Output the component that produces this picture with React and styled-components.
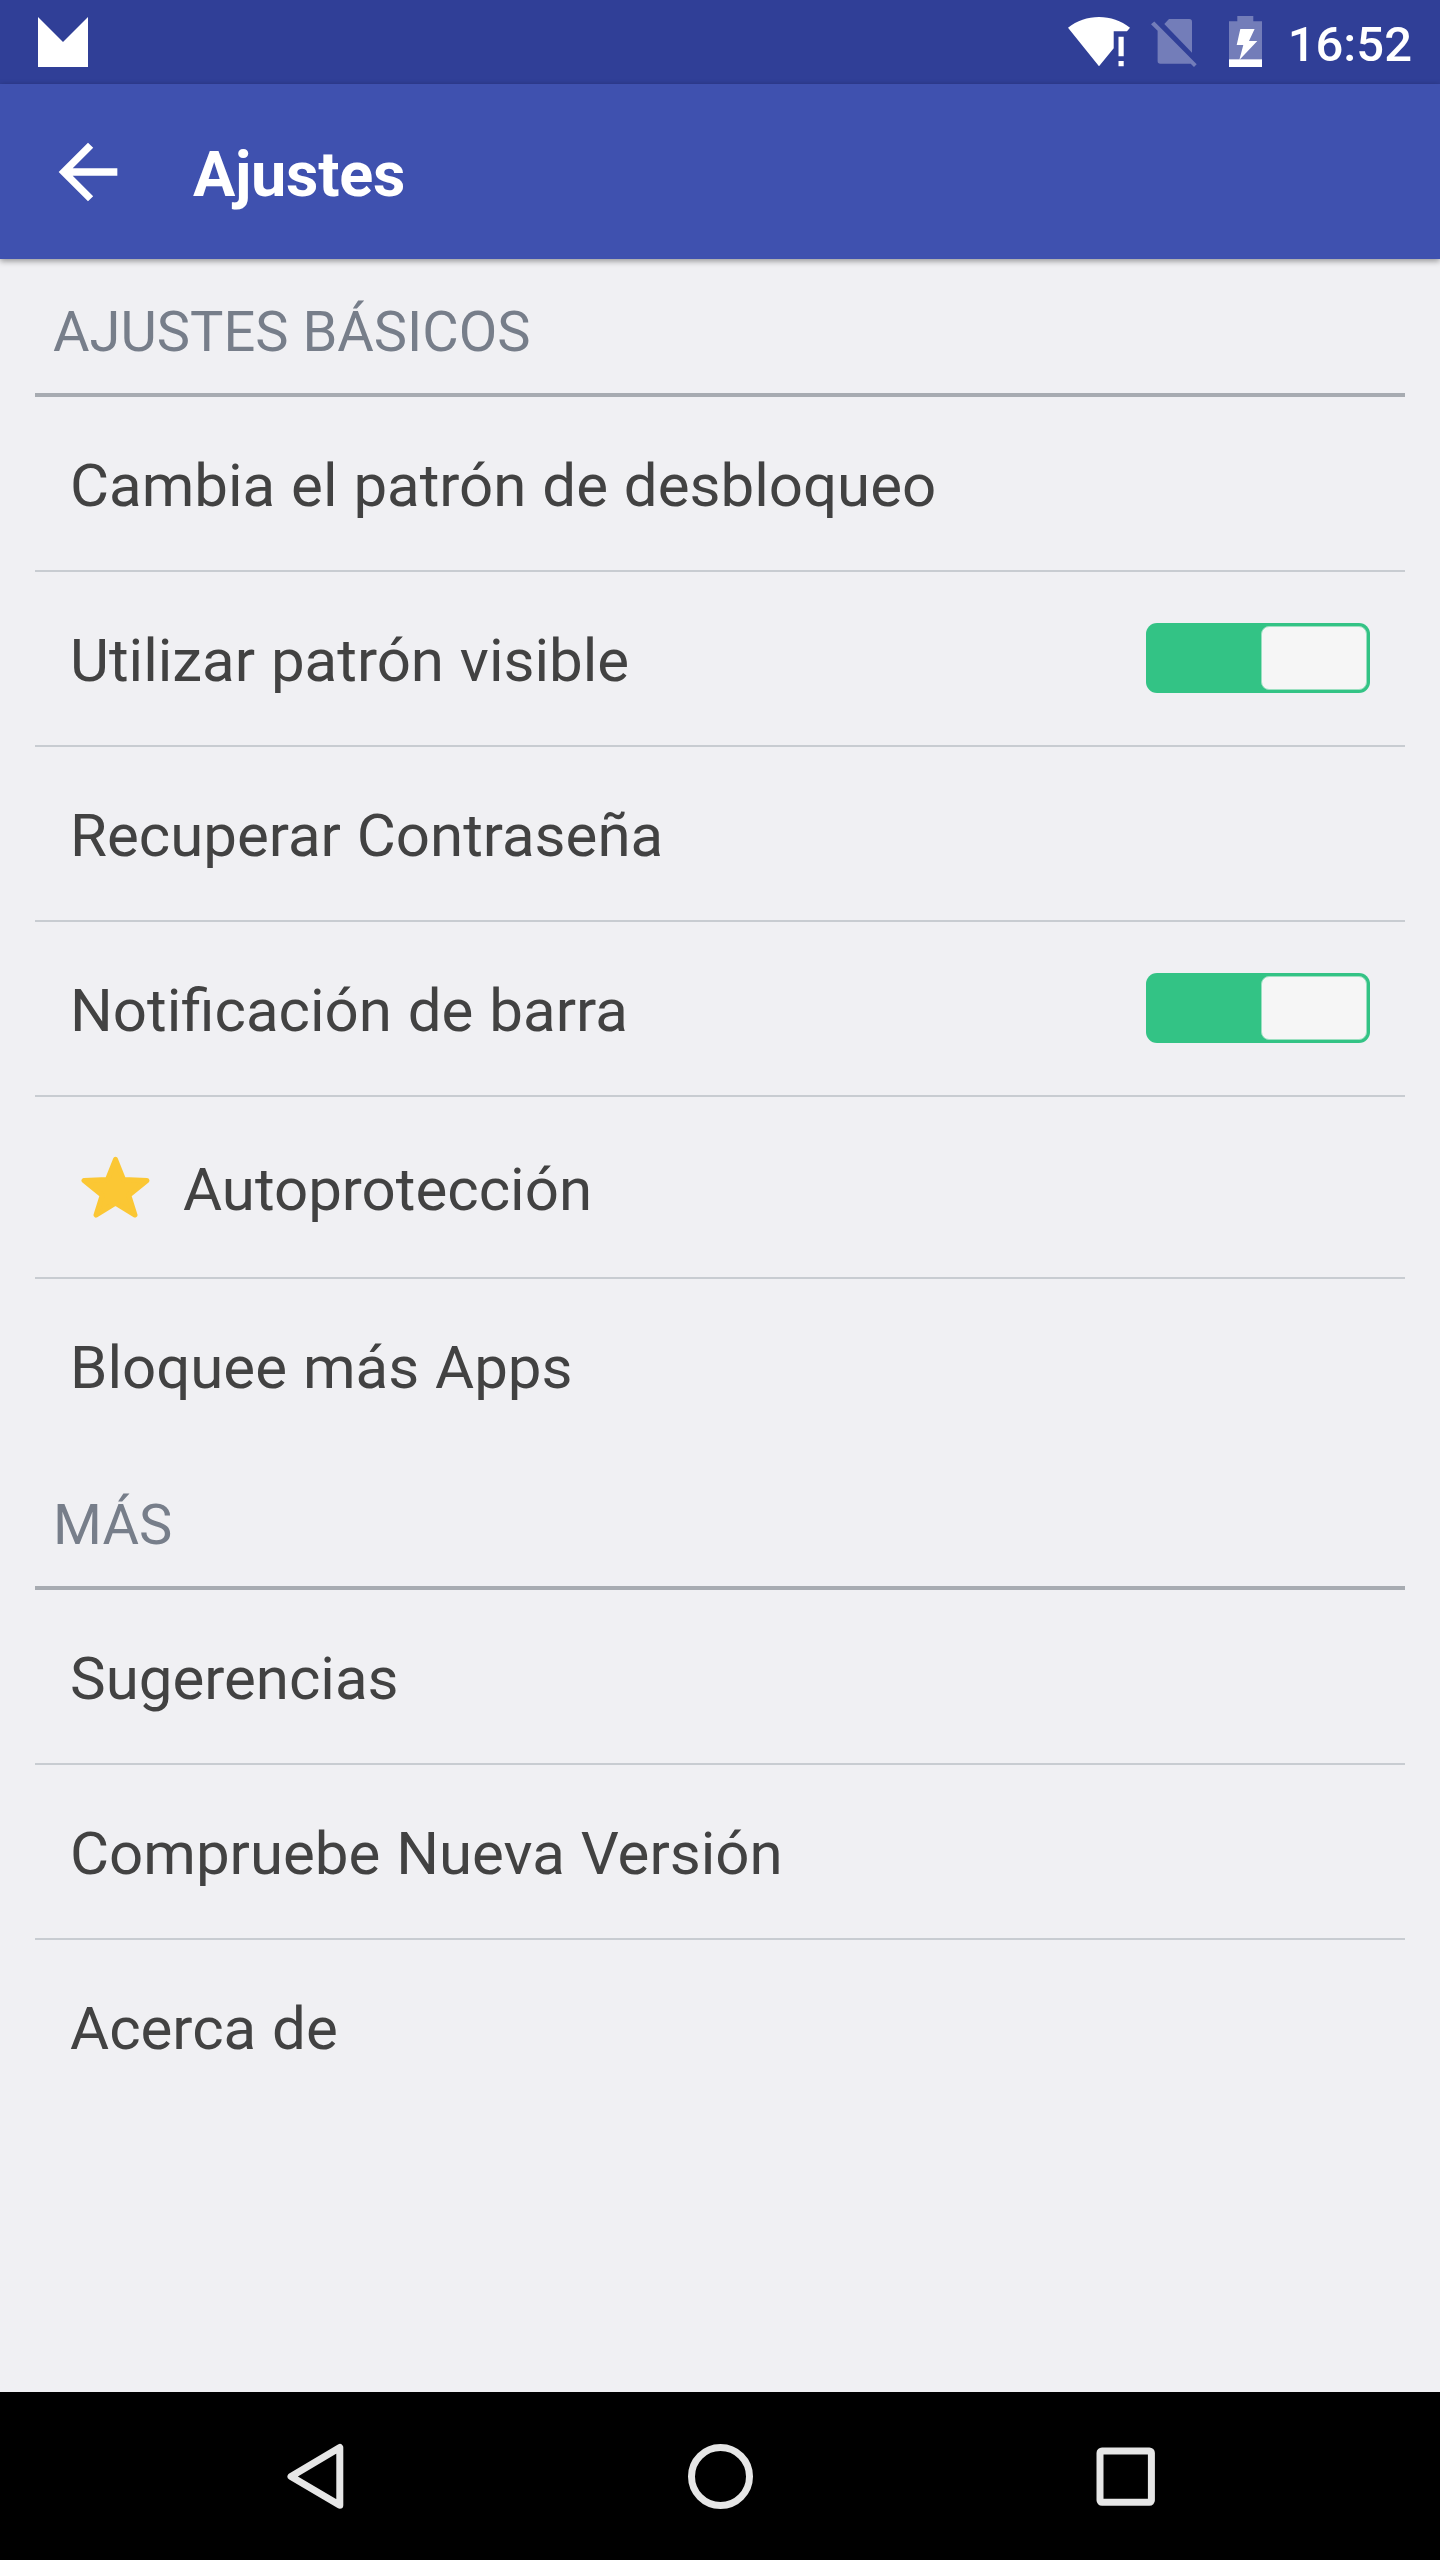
import React from 'react'
import styled, { createGlobalStyle } from 'styled-components'

const sections = [
    {
        title: 'AJUSTES BÁSICOS',
        items: [
            { label: 'Cambia el patrón de desbloqueo' },
            { label: 'Utilizar patrón visible', toggle: true },
            { label: 'Recuperar Contraseña' },
            { label: 'Notificación de barra', toggle: true },
            { label: 'Autoprotección', starred: true },
            { label: 'Bloquee más Apps' },
        ],
    },
    {
        title: 'MÁS',
        items: [
            { label: 'Sugerencias' },
            { label: 'Compruebe Nueva Versión' },
            { label: 'Acerca de' },
        ],
    },
]

const App = () => {
    return (
        <Screen>
            <GlobalStyle />
            <StatusBar>
                <MailIcon />
                <StatusIcons>
                    <WifiIcon />
                    <NoSimIcon />
                    <BatteryIcon />
                    <Clock>16:52</Clock>
                </StatusIcons>
            </StatusBar>
            <AppBar>
                <BackArrow />
                <Title>Ajustes</Title>
            </AppBar>
            <Content>
                {sections.map(section => (
                    <section key={section.title}>
                        <SectionTitle>{section.title}</SectionTitle>
                        <List>
                            {section.items.map(item => (
                                <Row key={item.label} $tall={item.starred}>
                                    {item.starred && <StarIcon />}
                                    <Label>{item.label}</Label>
                                    {item.toggle && (
                                        <Switch>
                                            <Knob />
                                        </Switch>
                                    )}
                                </Row>
                            ))}
                        </List>
                    </section>
                ))}
            </Content>
            <NavBar>
                <NavBack />
                <NavHome />
                <NavRecents />
            </NavBar>
        </Screen>
    )
}

const MailIcon = () => (
    <svg width="50" height="50" viewBox="0 0 50 50" fill="#fff">
        <path d="M0 0l25 25L50 0v50H0z" />
    </svg>
)

const WifiIcon = () => (
    <svg width="62" height="50" viewBox="0 0 62 50" fill="#fff">
        <path d="M0 10.7C9 3.8 19.500 0 31 0s22 3.800 31 10.700l-3 3.600H45.700v17L31 49.300z" />
        <path d="M50.500 19.700h5.200v19.600h-5.200zM50.500 44h5.200v5.200h-5.200z" />
    </svg>
)

const NoSimIcon = () => (
    <svg width="46" height="50" viewBox="0 0 46 50" fill="#737db9">
        <path d="M13.300 7l4.700-5h20.300a2.700 2.700 0 0 1 2.700 2.700V35.700z" />
        <path d="M0 7.300l3.300-2.700L45.700 47.300l-2.700 2.700-3.300-3.300H9.300a2.700 2.700 0 0 1-2.700-2.700V13.700z" />
    </svg>
)

const BatteryIcon = () => (
    <svg width="33" height="52" viewBox="0 0 33 52">
        <path d="M8.300 0h16v5.300H33v38H0v-38h8.300z" fill="#737db9" />
        <path d="M0 43.300h33V51H0z" fill="#fff" />
        <path d="M11.300 13h14.300l-5.600 12h8.300L10.300 44l4-15H7.700z" fill="#fff" />
    </svg>
)

const BackArrow = () => (
    <svg width="88" height="88" viewBox="0 0 24 24" fill="#fff">
        <path d="M20 11H7.830l5.590-5.590L12 4l-8 8 8 8 1.410-1.410L7.830 13H20z" />
    </svg>
)

const StarIcon = () => (
    <Star width="69" height="62" viewBox="0 0 69 62">
        <path
            d="M34.500 3.300l8 20.200 23.500 1-18.200 14.800L54 59 34.500 47 15 59l6.200-19.700L3 24.500l23.500-1z"
            fill="#fbc734"
            stroke="#fbc734"
            strokeWidth="5"
            strokeLinejoin="round"
        />
    </Star>
)

const NavBack = () => (
    <svg width="66" height="66" viewBox="0 0 66 66" fill="none">
        <path
            d="M57.800 4.500v57.700L9 33.500z"
            stroke="#e6e6e6"
            strokeWidth="7"
            strokeLinejoin="round"
        />
    </svg>
)

const NavHome = () => (
    <svg width="66" height="66" viewBox="0 0 66 66" fill="none">
        <circle cx="33.500" cy="33.500" r="29" stroke="#e6e6e6" strokeWidth="7" />
    </svg>
)

const NavRecents = () => (
    <svg width="66" height="66" viewBox="0 0 66 66" fill="none">
        <rect
            x="8"
            y="7.900"
            width="51.400"
            height="51.400"
            rx="2"
            stroke="#e6e6e6"
            strokeWidth="7"
        />
    </svg>
)

const GlobalStyle = createGlobalStyle`
    * {
        box-sizing: border-box;
    }

    body {
        margin: 0;
    }
`

const Screen = styled('div')`
    background: #f0f0f3;
    display: flex;
    flex-direction: column;
    font-family: Roboto, sans-serif;
    height: 2560px;
    width: 1440px;
`

const StatusBar = styled('header')`
    align-items: center;
    background: #303f97;
    display: flex;
    flex: none;
    height: 84px;
    justify-content: space-between;
    padding: 0 28px 0 38px;
`

const StatusIcons = styled('div')`
    align-items: center;
    display: flex;

    > svg:nth-child(2) {
        margin: 0 32px 0 21px;
    }
`

const Clock = styled('span')`
    color: #fff;
    font-size: 49px;
    font-weight: 500;
    line-height: 58px;
    margin: 6px 0 0 26px;
`

const AppBar = styled('div')`
    align-items: center;
    background: #3f51af;
    /* Soft edge falling onto the list below. */
    box-shadow: 0 2px 6px rgba(0, 0, 0, 0.4);
    display: flex;
    flex: none;
    height: 175px;
    padding-left: 44px;
`

const Title = styled('h1')`
    color: #fff;
    font-size: 63px;
    font-weight: 700;
    letter-spacing: -0.3px;
    line-height: 74px;
    margin: 6px 0 0 61px;
`

const Content = styled('main')`
    flex: 1;
    padding: 0 35px;
`

const SectionTitle = styled('h2')`
    border-bottom: 4px solid #a7abb1;
    color: #777e8a;
    font-size: 56px;
    font-weight: 400;
    height: 138px;
    line-height: 66px;
    margin: 0;
    padding: 40px 18px 0;
`

const List = styled('ul')`
    list-style: none;
    margin: 0;
    padding: 0;
`

const Row = styled('li')`
    align-items: center;
    /* Keeps the divider out of the row's height. */
    box-sizing: content-box;
    display: flex;
    height: ${({ $tall }) => ($tall ? 180 : 173)}px;
    padding: 0 35px;

    & + & {
        border-top: 2px solid #c8ccd1;
    }
`

const Star = styled('svg')`
    margin: 0 33px 0 11px;
`

const Label = styled('span')`
    color: #424242;
    flex: 1;
    font-size: 60px;
    line-height: 70px;
    margin-top: 5px;
    word-spacing: 1px;
`

const Switch = styled('div')`
    background: #33c385;
    border-radius: 11px;
    display: flex;
    height: 70px;
    justify-content: flex-end;
    margin-bottom: 1px;
    padding: 3px;
    width: 224px;
`

const Knob = styled('div')`
    background: #f6f6f6;
    border: 1px solid #9ce0c1;
    border-radius: 8px;
    width: 106px;
`

const NavBar = styled('nav')`
    align-items: center;
    background: #000;
    display: flex;
    flex: none;
    gap: 339px;
    height: 168px;
    justify-content: center;
`

export default App
